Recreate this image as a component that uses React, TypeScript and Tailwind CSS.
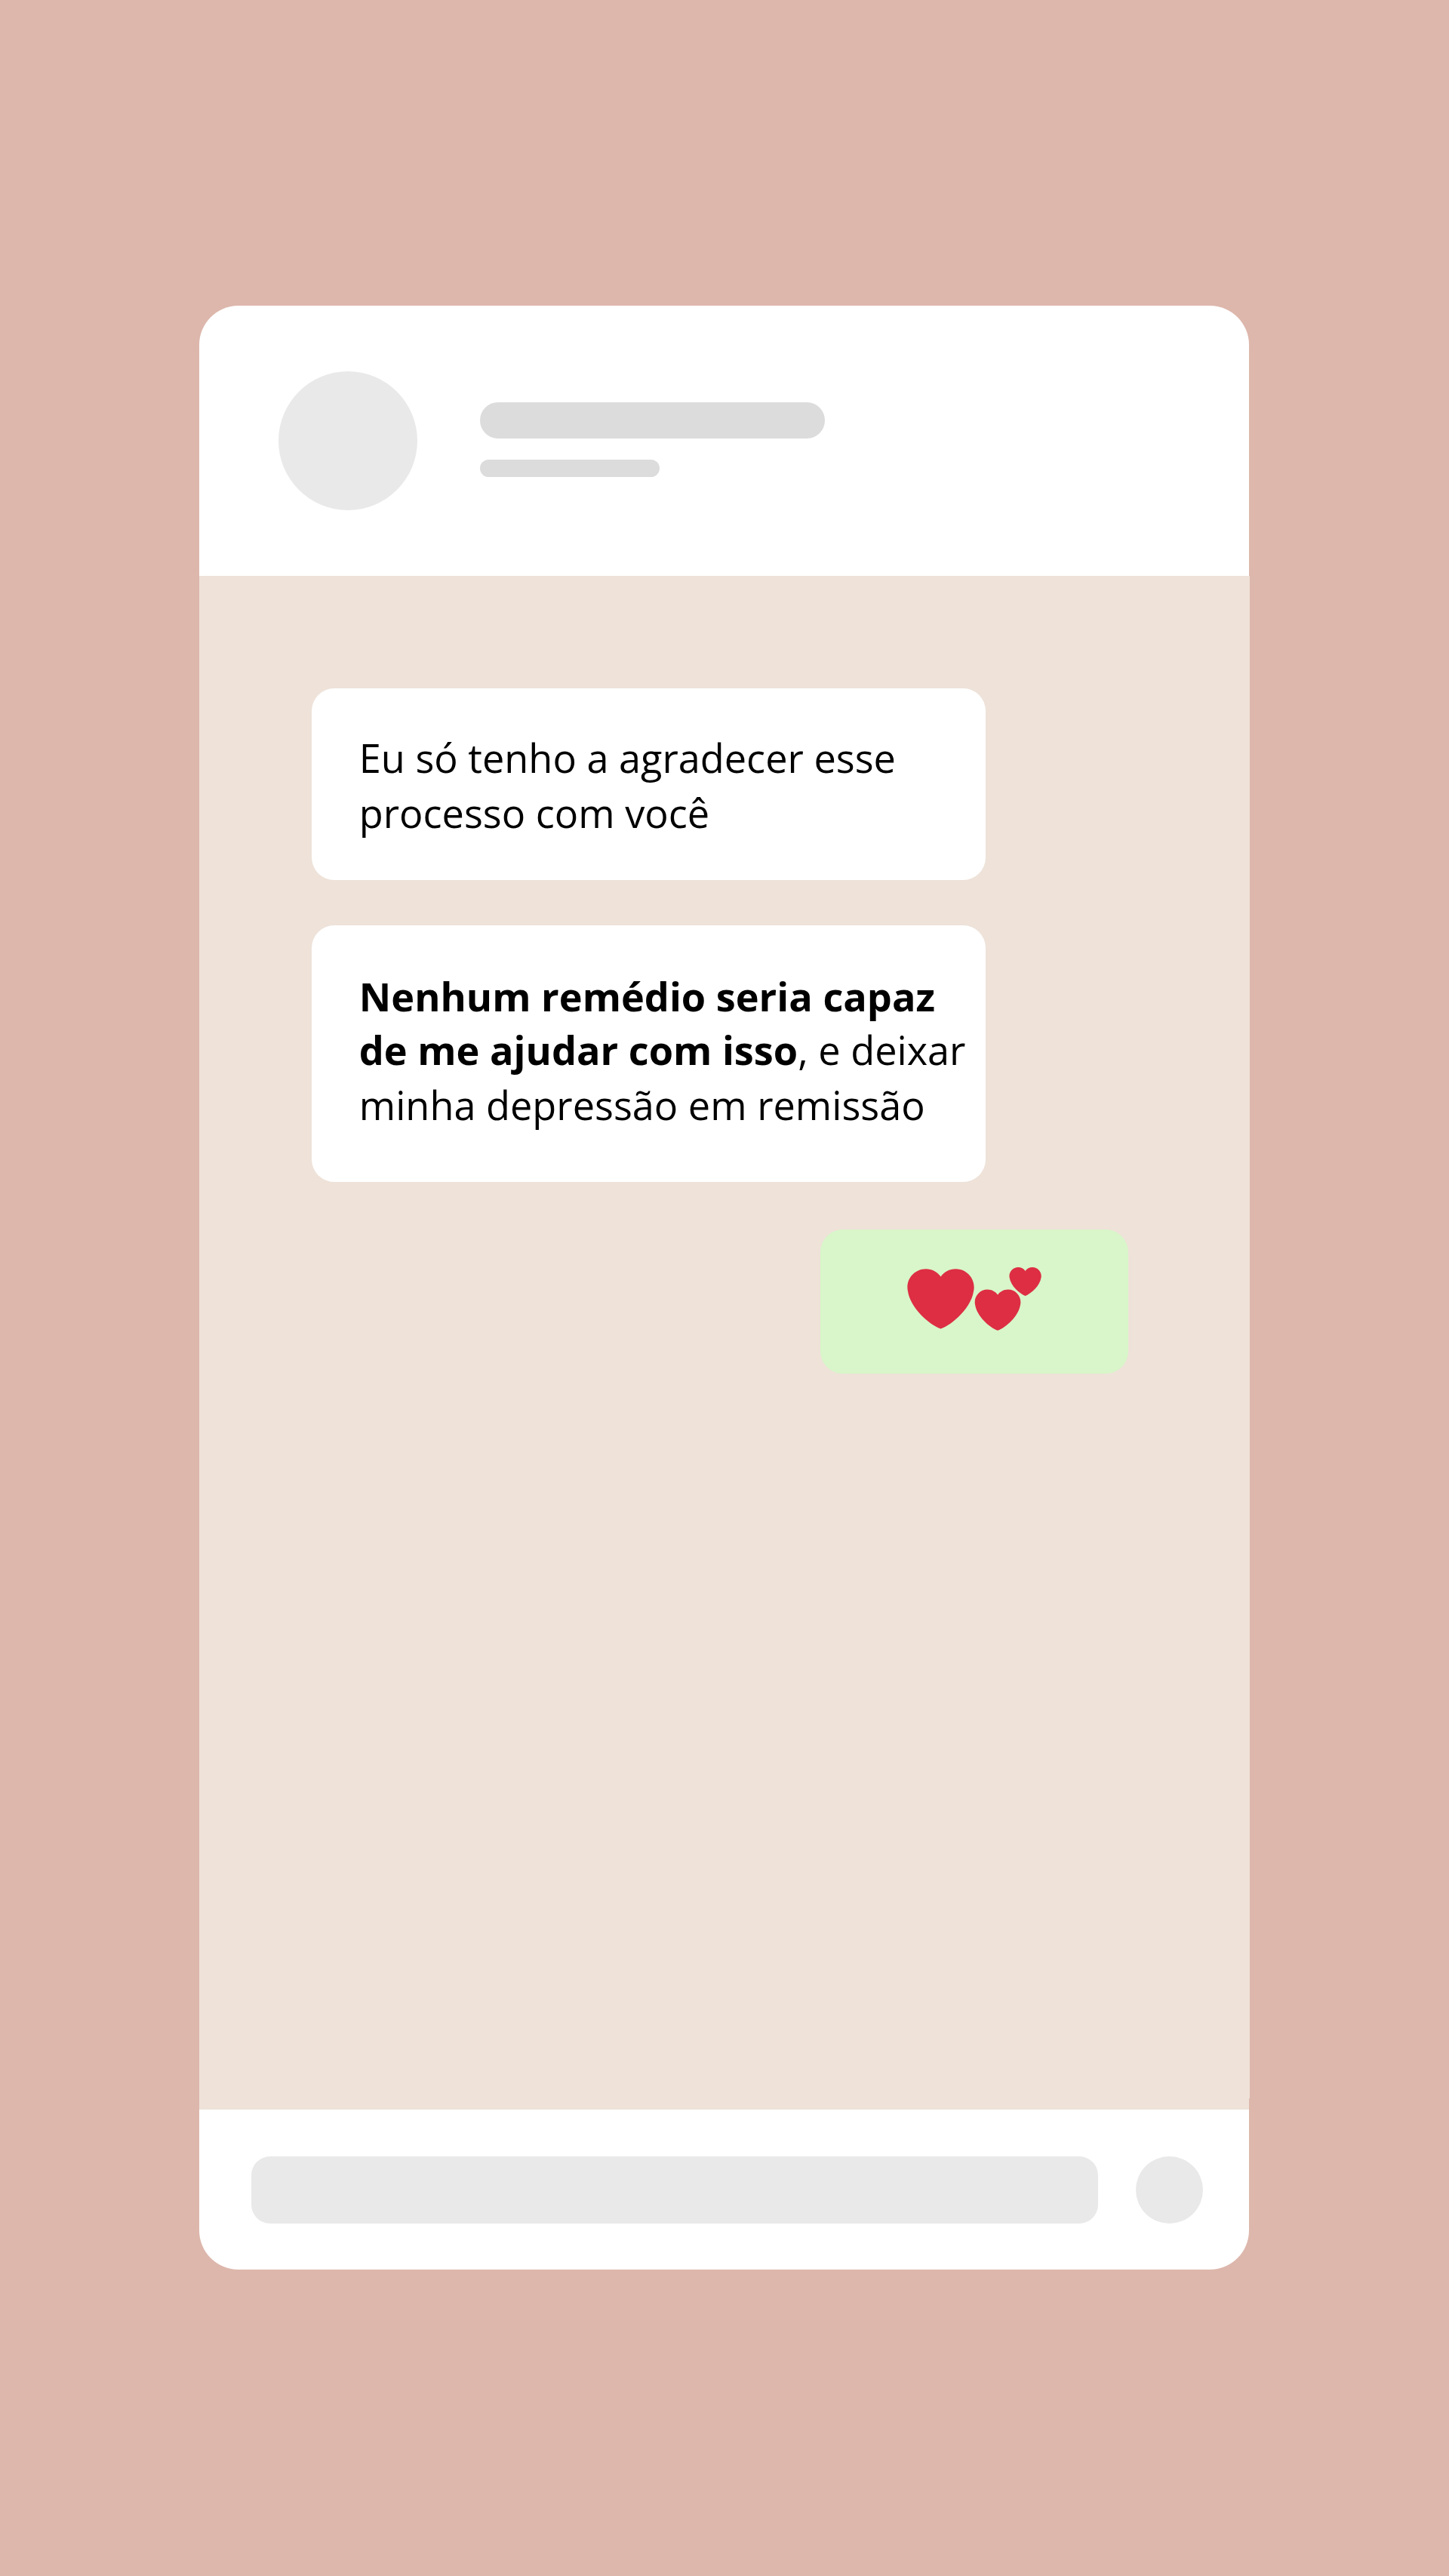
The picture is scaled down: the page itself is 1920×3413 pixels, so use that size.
const HEART =
  "M35.885 11.833c0-5.45-4.418-9.868-9.867-9.868-3.308 0-6.227 1.633-8.018 4.129-1.791-2.496-4.71-4.129-8.017-4.129-5.45 0-9.868 4.417-9.868 9.868 0 .772.098 1.52.266 2.241C1.751 22.587 11.216 31.568 18 34.034c6.783-2.466 16.249-11.447 17.617-19.959.17-.721.268-1.469.268-2.242z";

function Hearts() {
  return (
    <svg className="h-[86px] w-[180px] fill-[#dd2e44]" viewBox="0 0 180 86" aria-hidden="true">
      <path d={HEART} transform="translate(0.1 -1.55) scale(2.468)" />
      <path d={HEART} transform="translate(89.5 27.1) scale(1.697)" />
      <path d={HEART} transform="translate(135.3 -1.3) scale(1.183)" />
    </svg>
  );
}

function ChatHeader() {
  return (
    <header className="flex h-[358px] items-start rounded-t-[52px] bg-white pl-[105px] pt-[87px]">
      <div className="size-[184px] rounded-full bg-[#e9e9e9]" />
      <div className="ml-[83px] mt-[41px] flex flex-col gap-[28px]">
        <div className="h-12 w-[457px] rounded-full bg-[#dcdcdc]" />
        <div className="h-[23px] w-[238px] rounded-full bg-[#dcdcdc]" />
      </div>
    </header>
  );
}

function Composer() {
  return (
    <footer className="flex h-[212px] items-start rounded-b-[52px] bg-white pl-[69px] pt-[62px]">
      <div className="h-[89px] w-[1122px] rounded-[25px] bg-[#e9e9e9]" />
      <div className="ml-[50px] size-[89px] rounded-full bg-[#e9e9e9]" />
    </footer>
  );
}

export default function App() {
  return (
    <div className="h-[3413px] w-[1920px] bg-[#ddb7ac] pl-[264px] pt-[405px] font-['Open_Sans',sans-serif] text-[52.25px] text-black">
      <div className="flex h-[2602px] w-[1391px] flex-col">
        <ChatHeader />
        <main className="flex h-[2032px] flex-col">
          <div className="-mr-px flex h-[2017px] flex-col items-start bg-[#eee2d9] pl-[149px] pt-[149px]">
            <div className="h-[254px] w-[893px] whitespace-nowrap rounded-[30px] bg-white pl-[62.8px] pt-[55px]">
              <p className="leading-[73px]">Eu só tenho a agradecer esse</p>
              <p className="leading-[73px]">processo com você</p>
            </div>
            <div className="mt-[60px] h-[340px] w-[893px] whitespace-nowrap rounded-[30px] bg-white pl-[62.8px] pt-[58px]">
              <p className="font-bold leading-[71px]">Nenhum remédio seria capaz</p>
              <p className="leading-[71px]">
                <strong className="font-bold">de me ajudar com isso</strong>, e deixar
              </p>
              <p className="leading-[75px]">minha depressão em remissão</p>
            </div>
            <div className="ml-[674px] mt-[63px] h-[191px] w-[408px] rounded-[30px] bg-[#d8f6c9] pl-[115px] pt-[49px]">
              <Hearts />
            </div>
          </div>
          <div className="h-[15px] bg-[#eee2d9]" />
        </main>
        <Composer />
      </div>
    </div>
  );
}
